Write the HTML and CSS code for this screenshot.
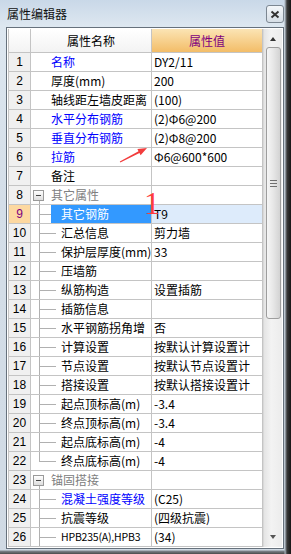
FILE: index.html
```html
<!DOCTYPE html>
<html lang="zh-CN">
<head>
    <meta charset="UTF-8">
    <title>属性编辑器</title>
    <link rel="stylesheet" href="styles.css">
</head>
<body>
<div class="window">
    <!-- title bar -->
    <div class="titlebar">
        <span class="title">属性编辑器</span>
        <span class="close">
            <svg width="10" height="9" viewBox="0 0 10 9"><path d="M1.5 1.5 L8.5 7.5 M8.5 1.5 L1.5 7.5" stroke="#333" stroke-width="2"/></svg>
        </span>
    </div>

    <div class="panel">
        <div class="grid">
            <div class="row head">
                <div class="num"></div>
                <div class="name">属性名称</div>
                <div class="val">属性值</div>
            </div>

            <div class="row"><div class="num">1</div><div class="name blue">名称</div><div class="val">DY2/11</div></div>
            <div class="row"><div class="num">2</div><div class="name">厚度(mm)</div><div class="val">200</div></div>
            <div class="row"><div class="num">3</div><div class="name">轴线距左墙皮距离</div><div class="val">(100)</div></div>
            <div class="row"><div class="num">4</div><div class="name blue">水平分布钢筋</div><div class="val">(2)Φ6@200</div></div>
            <div class="row"><div class="num">5</div><div class="name blue">垂直分布钢筋</div><div class="val">(2)Φ8@200</div></div>
            <div class="row"><div class="num">6</div><div class="name blue">拉筋</div><div class="val">Φ6@600*600</div></div>
            <div class="row"><div class="num">7</div><div class="name">备注</div><div class="val"></div></div>

            <!-- group: 其它属性 -->
            <div class="row"><div class="num">8</div><div class="name group"><span class="box"></span>其它属性</div><div class="val"></div></div>
            <div class="row selected"><div class="num">9</div><div class="name child"><span class="label">其它钢筋</span></div><div class="val">T9</div></div>
            <div class="row"><div class="num">10</div><div class="name child"><span class="label">汇总信息</span></div><div class="val">剪力墙</div></div>
            <div class="row"><div class="num">11</div><div class="name child"><span class="label">保护层厚度(mm)</span></div><div class="val">33</div></div>
            <div class="row"><div class="num">12</div><div class="name child"><span class="label">压墙筋</span></div><div class="val"></div></div>
            <div class="row"><div class="num">13</div><div class="name child"><span class="label">纵筋构造</span></div><div class="val">设置插筋</div></div>
            <div class="row"><div class="num">14</div><div class="name child"><span class="label">插筋信息</span></div><div class="val"></div></div>
            <div class="row"><div class="num">15</div><div class="name child"><span class="label">水平钢筋拐角增</span></div><div class="val">否</div></div>
            <div class="row"><div class="num">16</div><div class="name child"><span class="label">计算设置</span></div><div class="val">按默认计算设置计</div></div>
            <div class="row"><div class="num">17</div><div class="name child"><span class="label">节点设置</span></div><div class="val">按默认节点设置计</div></div>
            <div class="row"><div class="num">18</div><div class="name child"><span class="label">搭接设置</span></div><div class="val">按默认搭接设置计</div></div>
            <div class="row"><div class="num">19</div><div class="name child"><span class="label">起点顶标高(m)</span></div><div class="val">-3.4</div></div>
            <div class="row"><div class="num">20</div><div class="name child"><span class="label">终点顶标高(m)</span></div><div class="val">-3.4</div></div>
            <div class="row"><div class="num">21</div><div class="name child"><span class="label">起点底标高(m)</span></div><div class="val">-4</div></div>
            <div class="row"><div class="num">22</div><div class="name child last"><span class="label">终点底标高(m)</span></div><div class="val">-4</div></div>

            <!-- group: 锚固搭接 -->
            <div class="row"><div class="num">23</div><div class="name group"><span class="box"></span>锚固搭接</div><div class="val"></div></div>
            <div class="row"><div class="num">24</div><div class="name child"><span class="label blue">混凝土强度等级</span></div><div class="val">(C25)</div></div>
            <div class="row"><div class="num">25</div><div class="name child"><span class="label">抗震等级</span></div><div class="val">(四级抗震)</div></div>
            <div class="row"><div class="num">26</div><div class="name child"><span class="label small">HPB235(A),HPB3</span></div><div class="val">(34)</div></div>
        </div>

        <!-- vertical scrollbar -->
        <div class="scrollbar">
            <div class="arrow up"></div>
            <div class="thumb"><span class="grip"></span></div>
            <div class="track"></div>
            <div class="arrow down"></div>
        </div>
    </div>

    <!-- red marks drawn over the screenshot -->
    <svg class="mark-arrow" width="36" height="22" viewBox="0 0 36 22">
        <polygon points="3.8,17.6 22.5,7.3 21.4,5 31,4 24.6,11.3 23.5,9 4.3,18.4" fill="#f23c3c"/>
    </svg>
    <span class="mark-one">1</span>
</div>
</body>
</html>
```

FILE: styles.css
```css
body {
    margin: 0;
    font-family: "Noto Sans CJK SC", "Liberation Sans", sans-serif;
    font-size: 12px;
    color: #000;
}

/* window frame */
.window {
    position: relative;
    width: 291px;
    height: 554px;
    box-sizing: border-box;
    padding-left: 6px;
    background:
        linear-gradient(to right, transparent 284px, #a7b1bb 285px, #3a3a3a 287px, #161616 291px),
        linear-gradient(to bottom, transparent 550px, #7d858c 551px, #4a4a4a 554px),
        linear-gradient(to bottom, #c9d8e8, #dde7f0 26px, #d4dee8 200px, #d0dae4);
    overflow: hidden;
}
.titlebar {
    height: 27px;
    display: flex;
    align-items: center;
    justify-content: space-between;
    padding-right: 7px;
}
.title {
    margin-left: 1px;
    font-size: 12px;
    color: #111;
}
.close {
    width: 16px;
    height: 16px;
    display: flex;
    align-items: center;
    justify-content: center;
    border: 1px solid #7c8792;
    border-radius: 3px;
    background: linear-gradient(#f4f7fa, #d6dee6);
    margin-top: 1px;
}

/* property panel */
.panel {
    width: 278px;
    height: 522px;
    box-sizing: border-box;
    border: 1px solid #66717c;
    background: #fff;
    padding: 1px;
    display: flex;
}
.grid {
    width: 255px;
    border-left: 1px solid #c4c4c4;
    box-sizing: border-box;
}
.row {
    display: grid;
    grid-template-columns: 22px 121px 111px;
    height: 19px;
}
.row > div {
    box-sizing: border-box;
    border-right: 1px solid #c4c4c4;
    border-bottom: 1px solid #c4c4c4;
    line-height: 18px;
    white-space: nowrap;
    overflow: hidden;
}
.num {
    text-align: center;
    background: #f0f0f0;
    font-family: "Liberation Sans", sans-serif;
    font-size: 12px;
}
.name {
    padding-left: 20px;
}
.val {
    padding-left: 2px;
}
.blue {
    color: #0000ff;
}

/* header row */
.row.head {
    height: 24px;
}
.row.head > div {
    line-height: 23px;
    text-align: center;
    padding: 0;
    background: linear-gradient(#ffffff, #f3f3f3);
}
.row.head > .val {
    color: #800080;
    background: linear-gradient(#fbe4b4, #f3bd68);
}

/* tree */
.name.group {
    padding-left: 2px;
    color: #808080;
    display: flex;
    align-items: center;
    background: linear-gradient(#b0b0b0, #b0b0b0) 8px 14px / 1px 5px no-repeat;
}
.box {
    width: 9px;
    height: 9px;
    border: 1px solid #9a9a9a;
    margin-right: 7px;
    background:
        linear-gradient(#444, #444) center / 5px 1px no-repeat,
        linear-gradient(#ffffff, #dedede);
}
.name.child {
    padding-left: 20px;
    background:
        linear-gradient(#b0b0b0, #b0b0b0) 8px 0 / 1px 100% no-repeat,
        linear-gradient(#b0b0b0, #b0b0b0) 9px 9px / 16px 1px no-repeat;
}
.name.child.last {
    background:
        linear-gradient(#b0b0b0, #b0b0b0) 8px 0 / 1px 10px no-repeat,
        linear-gradient(#b0b0b0, #b0b0b0) 9px 9px / 16px 1px no-repeat;
}
.label {
    display: block;
    padding-left: 10px;
}
.label.small {
    font-size: 10.5px;
    letter-spacing: -0.2px;
}

/* selected row */
.row.selected > .num {
    background: #fdd8a0;
    color: #800080;
}
.row.selected .label {
    background: #3399ff;
    color: #fff;
}
.row.selected > .val {
    background: #ddebfb;
}

/* scrollbar */
.scrollbar {
    width: 19px;
    display: flex;
    flex-direction: column;
    align-items: center;
    background: linear-gradient(to right, #e4e4e4, #f3f3f3 40%, #ececec);
    border-left: 1px solid #d8d8d8;
    box-sizing: border-box;
}
.arrow {
    height: 17px;
    width: 100%;
    display: flex;
    align-items: center;
    justify-content: center;
}
.arrow.up::before {
    content: "";
    border-left: 3px solid transparent;
    border-right: 3px solid transparent;
    border-bottom: 4px solid #333;
    margin-top: 2px;
}
.arrow.down::before {
    content: "";
    border-left: 3px solid transparent;
    border-right: 3px solid transparent;
    border-top: 4px solid #555;
    margin-bottom: 4px;
}
.thumb {
    width: 15px;
    height: 272px;
    margin-top: 1px;
    box-sizing: border-box;
    border: 1px solid #9d9d9d;
    border-radius: 3px;
    background: linear-gradient(to right, #f6f6f6, #e6e6e6 50%, #d3d3d3);
    display: flex;
    align-items: center;
    justify-content: center;
}
.grip {
    width: 7px;
    height: 7px;
    background: repeating-linear-gradient(#6f6f6f 0 1px, transparent 1px 3px);
}
.track {
    flex: 1;
}

/* red annotations */
.mark-arrow {
    position: absolute;
    left: 116px;
    top: 144px;
}
.mark-one {
    position: absolute;
    left: 144px;
    top: 187px;
    font-family: "Liberation Serif", serif;
    font-size: 32px;
    line-height: 32px;
    color: #ff3c3c;
}
```
